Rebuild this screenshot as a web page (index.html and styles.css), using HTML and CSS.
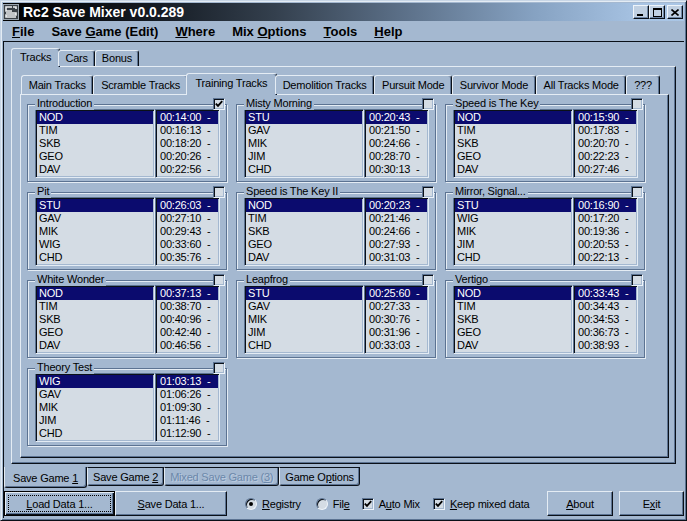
FILE: index.html
```html
<!DOCTYPE html>
<html>
<head>
<meta charset="utf-8">
<link rel="stylesheet" href="styles.css">
</head>
<body>
<div class="win">
  <div class="titlebar">
    <svg class="appicon" width="16" height="16" viewBox="0 0 16 16"><rect x="0" y="0" width="16" height="16" fill="#3a4046"/><rect x="0.5" y="0.5" width="15" height="15" fill="none" stroke="#9aa4ae"/><path d="M9 3H3v4h6M3 9h10v2H3v2h10" stroke="#eef0f2" stroke-width="1.6" fill="none"/><path d="M10 3h3v2" stroke="#eef0f2" stroke-width="1.6" fill="none"/></svg>
    <span class="title">Rc2 Save Mixer v0.0.289</span>
    <div class="wbtns">
      <span class="wbtn"><svg width="8" height="7" viewBox="0 0 8 7"><rect x="0" y="5" width="6" height="2" fill="#000"/></svg></span>
      <span class="wbtn"><svg width="9" height="9" viewBox="0 0 9 9"><rect x="0.5" y="0.5" width="8" height="8" fill="none" stroke="#000"/><rect x="0" y="0" width="9" height="2" fill="#000"/></svg></span>
      <span class="wbtn wclose"><svg width="8" height="7" viewBox="0 0 8 7"><path d="M0.5 0.5L7.5 6.5M7.5 0.5L0.5 6.5" stroke="#000" stroke-width="1.6"/></svg></span>
    </div>
  </div>
  <div class="menubar">
    <span><u>F</u>ile</span>
    <span>Save <u>G</u>ame (Edit)</span>
    <span><u>W</u>here</span>
    <span>Mix <u>O</u>ptions</span>
    <span><u>T</u>ools</span>
    <span><u>H</u>elp</span>
  </div>
  <div class="client">
    <div class="otabs">
      <div class="tabrow orow">
        <div class="tab sel">Tracks</div>
        <div class="tab">Cars</div>
        <div class="tab">Bonus</div>
      </div>
      <div class="panel opanel">
        <div class="tabrow irow">
          <div class="tab">Main Tracks</div>
          <div class="tab">Scramble Tracks</div>
          <div class="tab sel">Training Tracks</div>
          <div class="tab">Demolition Tracks</div>
          <div class="tab">Pursuit Mode</div>
          <div class="tab">Survivor Mode</div>
          <div class="tab">All Tracks Mode</div>
          <div class="tab">???</div>
        </div>
        <div class="panel ipanel">
          <div class="grid">

            <div class="grp">
              <span class="gt">Introduction</span>
              <span class="cb gchk"><svg width="8" height="8" viewBox="0 0 8 8"><path d="M0.8 3.6L3 5.9L7.2 1.2" stroke="#000" stroke-width="1.8" fill="none"/></svg></span>
              <div class="lst names"><div class="row sel">NOD</div><div class="row">TIM</div><div class="row">SKB</div><div class="row">GEO</div><div class="row">DAV</div></div>
              <div class="lst times"><div class="row sel">00:14:00  -</div><div class="row">00:16:13  -</div><div class="row">00:18:20  -</div><div class="row">00:20:26  -</div><div class="row">00:22:56  -</div></div>
            </div>

            <div class="grp">
              <span class="gt">Misty Morning</span>
              <span class="cb gchk"></span>
              <div class="lst names"><div class="row sel">STU</div><div class="row">GAV</div><div class="row">MIK</div><div class="row">JIM</div><div class="row">CHD</div></div>
              <div class="lst times"><div class="row sel">00:20:43  -</div><div class="row">00:21:50  -</div><div class="row">00:24:66  -</div><div class="row">00:28:70  -</div><div class="row">00:30:13  -</div></div>
            </div>

            <div class="grp">
              <span class="gt">Speed is The Key</span>
              <span class="cb gchk"></span>
              <div class="lst names"><div class="row sel">NOD</div><div class="row">TIM</div><div class="row">SKB</div><div class="row">GEO</div><div class="row">DAV</div></div>
              <div class="lst times"><div class="row sel">00:15:90  -</div><div class="row">00:17:83  -</div><div class="row">00:20:70  -</div><div class="row">00:22:23  -</div><div class="row">00:27:46  -</div></div>
            </div>

            <div class="grp">
              <span class="gt">Pit</span>
              <span class="cb gchk"></span>
              <div class="lst names"><div class="row sel">STU</div><div class="row">GAV</div><div class="row">MIK</div><div class="row">WIG</div><div class="row">CHD</div></div>
              <div class="lst times"><div class="row sel">00:26:03  -</div><div class="row">00:27:10  -</div><div class="row">00:29:43  -</div><div class="row">00:33:60  -</div><div class="row">00:35:76  -</div></div>
            </div>

            <div class="grp">
              <span class="gt">Speed is The Key II</span>
              <span class="cb gchk"></span>
              <div class="lst names"><div class="row sel">NOD</div><div class="row">TIM</div><div class="row">SKB</div><div class="row">GEO</div><div class="row">DAV</div></div>
              <div class="lst times"><div class="row sel">00:20:23  -</div><div class="row">00:21:46  -</div><div class="row">00:24:66  -</div><div class="row">00:27:93  -</div><div class="row">00:31:03  -</div></div>
            </div>

            <div class="grp">
              <span class="gt">Mirror, Signal...</span>
              <span class="cb gchk"></span>
              <div class="lst names"><div class="row sel">STU</div><div class="row">WIG</div><div class="row">MIK</div><div class="row">JIM</div><div class="row">CHD</div></div>
              <div class="lst times"><div class="row sel">00:16:90  -</div><div class="row">00:17:20  -</div><div class="row">00:19:36  -</div><div class="row">00:20:53  -</div><div class="row">00:22:13  -</div></div>
            </div>

            <div class="grp">
              <span class="gt">White Wonder</span>
              <span class="cb gchk"></span>
              <div class="lst names"><div class="row sel">NOD</div><div class="row">TIM</div><div class="row">SKB</div><div class="row">GEO</div><div class="row">DAV</div></div>
              <div class="lst times"><div class="row sel">00:37:13  -</div><div class="row">00:38:70  -</div><div class="row">00:40:96  -</div><div class="row">00:42:40  -</div><div class="row">00:46:56  -</div></div>
            </div>

            <div class="grp">
              <span class="gt">Leapfrog</span>
              <span class="cb gchk"></span>
              <div class="lst names"><div class="row sel">STU</div><div class="row">GAV</div><div class="row">MIK</div><div class="row">JIM</div><div class="row">CHD</div></div>
              <div class="lst times"><div class="row sel">00:25:60  -</div><div class="row">00:27:33  -</div><div class="row">00:30:76  -</div><div class="row">00:31:96  -</div><div class="row">00:33:03  -</div></div>
            </div>

            <div class="grp">
              <span class="gt">Vertigo</span>
              <span class="cb gchk"></span>
              <div class="lst names"><div class="row sel">NOD</div><div class="row">TIM</div><div class="row">SKB</div><div class="row">GEO</div><div class="row">DAV</div></div>
              <div class="lst times"><div class="row sel">00:33:43  -</div><div class="row">00:34:43  -</div><div class="row">00:34:53  -</div><div class="row">00:36:73  -</div><div class="row">00:38:93  -</div></div>
            </div>

            <div class="grp">
              <span class="gt">Theory Test</span>
              <span class="cb gchk"></span>
              <div class="lst names"><div class="row sel">WIG</div><div class="row">GAV</div><div class="row">MIK</div><div class="row">JIM</div><div class="row">CHD</div></div>
              <div class="lst times"><div class="row sel">01:03:13  -</div><div class="row">01:06:26  -</div><div class="row">01:09:30  -</div><div class="row">01:11:46  -</div><div class="row">01:12:90  -</div></div>
            </div>

          </div>
        </div>
      </div>
    </div>

    <div class="btabs">
      <div class="btab sel">Save Game <u>1</u></div>
      <div class="btab">Save Game <u>2</u></div>
      <div class="btab dis">Mixed Save Game (<u>3</u>)</div>
      <div class="btab">Game O<u>p</u>tions</div>
    </div>

    <div class="actions">
      <div class="btn def load"><span class="focus"><u>L</u>oad Data 1...</span></div>
      <div class="btn save"><u>S</u>ave Data 1...</div>
      <div class="opt o-reg"><span class="rb on"></span><span><u>R</u>egistry</span></div>
      <div class="opt o-file"><span class="rb"></span><span>Fil<u>e</u></span></div>
      <div class="opt o-auto"><span class="cb"><svg width="8" height="8" viewBox="0 0 8 8"><path d="M0.8 3.6L3 5.9L7.2 1.2" stroke="#000" stroke-width="1.8" fill="none"/></svg></span><span>A<u>u</u>to Mix</span></div>
      <div class="opt o-keep"><span class="cb"><svg width="8" height="8" viewBox="0 0 8 8"><path d="M0.8 3.6L3 5.9L7.2 1.2" stroke="#000" stroke-width="1.8" fill="none"/></svg></span><span><u>K</u>eep mixed data</span></div>
      <div class="btn about"><u>A</u>bout</div>
      <div class="btn exit">E<u>x</u>it</div>
    </div>
  </div>
</div>
</body>
</html>
```
FILE: styles.css
```css
* { box-sizing: border-box; }
html, body { margin: 0; padding: 0; }
body {
  width: 687px; height: 521px; overflow: hidden;
  background: #a4b8d0;
  font-family: "Liberation Sans", Arial, sans-serif;
  font-size: 11px; color: #000;
  letter-spacing: -0.2px;
}
u { text-decoration: underline; text-underline-offset: 1px; }

.win {
  width: 687px; height: 521px;
  border: 1px solid; border-color: #c8d6e6 #0a1018 #0a1018 #c8d6e6;
  box-shadow: inset 1px 1px 0 #e4ecf4, inset -1px -1px 0 #5c7392;
  padding: 2px;
  display: flex; flex-direction: column;
  background: #a4b8d0;
}

.titlebar {
  height: 18px; flex: none;
  display: flex; align-items: center;
  padding-right: 1px;
  background: linear-gradient(to right, #000000 0%, #141a22 22%, #34404e 40%, #5a6e86 58%, #86a2c2 78%, #a8c4e4 94%, #aac6e6 100%);
  color: #fff;
}
.appicon { flex: none; margin-right: 4px; }
.title { font-weight: bold; font-size: 14px; letter-spacing: 0; white-space: nowrap; }
.wbtns { margin-left: auto; display: flex; }
.wbtn {
  width: 16px; height: 14px;
  background: #c0d0e2;
  border: 1px solid; border-color: #eef4fa #0a1018 #0a1018 #eef4fa;
  box-shadow: inset -1px -1px 0 #6f87a6;
  display: flex; align-items: center; justify-content: center;
}
.wclose { margin-left: 2px; }

.menubar {
  height: 20px; flex: none;
  display: flex; align-items: center; gap: 17px;
  padding-left: 9px;
  font-weight: bold; font-size: 13px;
  letter-spacing: 0;
}

.client {
  flex: 1;
  border-top: 1px solid #0a1018;
  border-left: 1px solid #0a1018;
  display: flex; flex-direction: column;
}

.otabs { margin: 6px 0 0 7px; width: 665px; }

.tabrow {
  display: flex; align-items: flex-end;
  position: relative; z-index: 1;
  padding-left: 2px;
}
.orow { height: 18px; }
.irow { height: 21px; padding-left: 1px; flex: none; }

.tab {
  height: 16px; padding: 0 6px;
  background: #a4b8d0;
  border: 1px solid; border-bottom: none;
  border-color: #e4ecf4 #0a1018 transparent #e4ecf4;
  border-radius: 3px 3px 0 0;
  box-shadow: inset -1px 0 0 #5c7392;
  line-height: 15px; white-space: nowrap;
}
.tab.sel { height: 19px; margin: 0 -2px -1px; padding: 0 8px; line-height: 16px; }
.irow .tab { height: 19px; line-height: 18px; padding: 0 6.7px; }
.irow .tab.sel { height: 22px; line-height: 19px; padding: 0 8.7px; }

.panel {
  background: #a4b8d0;
  border: 1px solid; border-color: #e4ecf4 #0a1018 #0a1018 #e4ecf4;
  box-shadow: inset -1px -1px 0 #5c7392;
}
.opanel {
  height: 398px;
  padding: 6px 6px 5px 8px;
  display: flex; flex-direction: column;
}
.ipanel { flex: 1; }

.grid {
  display: grid;
  grid-template-columns: repeat(3, 200px);
  grid-auto-rows: 78px;
  gap: 10px 9px;
  padding: 9px 0 0 6px;
}

.grp {
  position: relative;
  border: 1px solid #5c7392;
  box-shadow: inset 1px 1px 0 #e4ecf4, 1px 1px 0 #e4ecf4;
  padding: 4px 0 0 7px;
  display: flex; align-items: flex-start;
}
.gt {
  position: absolute; top: -8px; left: 7px;
  padding: 0 2px; background: #a4b8d0;
  line-height: 13px; white-space: nowrap;
}
.gchk { position: absolute; top: -7px; right: 1px; }

.lst {
  height: 69px;
  background: #d4dce4;
  border: 1px solid; border-color: #5c7392 #e4ecf4 #e4ecf4 #5c7392;
  box-shadow: inset 1px 1px 0 #0a1018, inset -1px -1px 0 #a4b8d0;
  padding: 1px;
}
.names { width: 120px; }
.times { width: 65px; }
.row { height: 13px; line-height: 13px; padding-left: 2px; white-space: pre; }
.times .row { padding-left: 3px; }
.row.sel { background: #0b0b6e; color: #fff; }

.cb {
  width: 12px; height: 12px; flex: none;
  background: #d4dce4;
  border: 1px solid; border-color: #5c7392 #eef4fa #eef4fa #5c7392;
  box-shadow: inset 1px 1px 0 #0a1018, inset -1px -1px 0 #a4b8d0;
  display: flex; align-items: center; justify-content: center;
}
.rb {
  width: 12px; height: 12px; flex: none;
  border-radius: 50%;
  background: #d4dce4;
  border: 1px solid; border-color: #5c7392 #eef4fa #eef4fa #5c7392;
  box-shadow: inset 1px 1px 0 #0a1018;
  display: flex; align-items: center; justify-content: center;
}
.rb.on::after { content: ""; width: 4px; height: 4px; border-radius: 50%; background: #000; }

.btabs { display: flex; height: 21px; margin-top: 3px; flex: none; }
.btab {
  height: 19px; padding: 1px 5px 0;
  background: #a4b8d0;
  border: 1px solid; border-color: #0a1018 #0a1018 #0a1018 #e4ecf4;
  border-radius: 0 0 3px 3px;
  box-shadow: inset -1px -1px 0 #5c7392;
  line-height: 16px; white-space: nowrap;
}
.btab.sel { height: 21px; border-top: none; padding: 3px 8px 0; }
.btab.dis { color: #6c88aa; text-shadow: 1px 1px 0 #bccce0; }

.actions { display: flex; align-items: center; height: 25px; margin-top: 3px; flex: none; }
.btn {
  height: 25px;
  background: #a4b8d0;
  border: 1px solid; border-color: #e4ecf4 #0a1018 #0a1018 #e4ecf4;
  box-shadow: inset -1px -1px 0 #5c7392;
  display: flex; align-items: center; justify-content: center;
  white-space: nowrap;
}
.btn.def {
  border-color: #000;
  box-shadow: inset 1px 1px 0 #e4ecf4, inset -1px -1px 0 #0a1018, inset -2px -2px 0 #5c7392;
  padding: 3px;
}
.focus {
  flex: 1; align-self: stretch;
  border: 1px dotted #000;
  display: flex; align-items: center; justify-content: center;
}
.load { width: 111px; }
.save { width: 112px; }
.opt { display: flex; align-items: center; gap: 5px; white-space: nowrap; }
.o-reg { margin-left: 18px; }
.o-file { margin-left: 15px; }
.o-auto { margin-left: 12px; }
.o-keep { margin-left: 13px; }
.about { width: 66px; margin-left: auto; }
.exit { width: 65px; margin-left: 6px; }
```
